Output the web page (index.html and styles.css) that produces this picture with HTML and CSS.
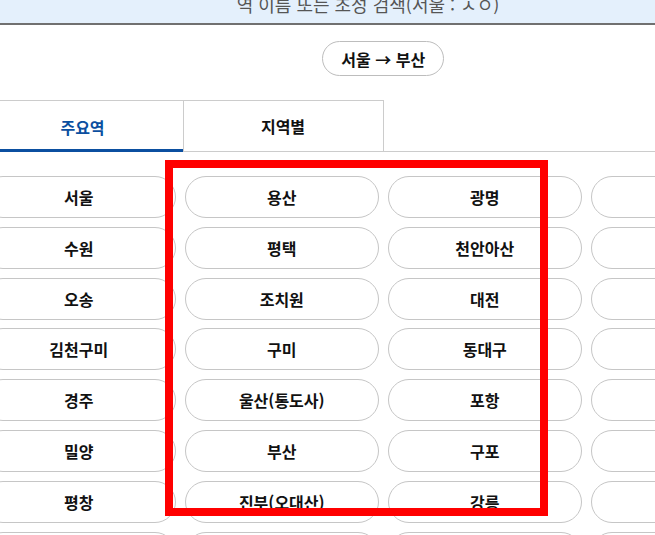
FILE: index.html
```html
<!DOCTYPE html>
<html lang="ko">
<head>
<meta charset="utf-8">
<link rel="stylesheet" href="styles.css">
</head>
<body>
<div class="search"><span class="search-text">역 이름 또는 초성 검색(서울 : ㅅㅇ)</span></div>
<div class="wrap">
  <div class="route-row"><button class="route">서울 → 부산</button></div>
  <div class="tabs">
    <div class="tab tab-first active">주요역</div>
    <div class="tab">지역별</div>
  </div>
  <div class="grid">
    <button class="st">서울</button><button class="st">용산</button><button class="st">광명</button><button class="st">영등포</button>
    <button class="st">수원</button><button class="st">평택</button><button class="st">천안아산</button><button class="st">아산</button>
    <button class="st">오송</button><button class="st">조치원</button><button class="st">대전</button><button class="st">서대전</button>
    <button class="st">김천구미</button><button class="st">구미</button><button class="st">동대구</button><button class="st">신경주</button>
    <button class="st">경주</button><button class="st">울산(통도사)</button><button class="st">포항</button><button class="st">마산</button>
    <button class="st">밀양</button><button class="st">부산</button><button class="st">구포</button><button class="st">창원</button>
    <button class="st">평창</button><button class="st">진부(오대산)</button><button class="st">강릉</button><button class="st">정동진</button>
    <button class="st">광주송정</button><button class="st">목포</button><button class="st">여수EXPO</button><button class="st">전주</button>
  </div>
</div>
<div class="highlight"></div>
</body>
</html>
```

FILE: styles.css
```css
html, body {
  margin: 0;
  padding: 0;
}
body {
  width: 655px;
  height: 535px;
  overflow: hidden;
  position: relative;
  background: #ffffff;
  font-family: "Noto Sans CJK KR", "Noto Sans", sans-serif;
  color: #111111;
}
.search {
  height: 23px;
  background: #e4f0fc;
  border-bottom: 2px solid #707070;
  display: flex;
  justify-content: center;
  padding-left: 81px;
  overflow: hidden;
}
.search-text {
  display: block;
  font-size: 18px;
  line-height: 18px;
  margin-top: -5px;
  color: #555555;
  white-space: nowrap;
}
.wrap {
  width: 803.5px;
  margin-left: -18.5px;
}
.route-row {
  display: flex;
  justify-content: center;
  padding-top: 16px;
}
.route {
  box-sizing: border-box;
  width: 122px;
  height: 35px;
  border: 1px solid #bdbdbd;
  border-radius: 18px;
  background: #ffffff;
  font-family: inherit;
  font-size: 16px;
  font-weight: 700;
  color: #111111;
  padding: 0;
}
.tabs {
  display: flex;
  margin-top: 24px;
  border-bottom: 1px solid #cccccc;
  height: 51px;
}
.tab {
  box-sizing: border-box;
  width: 200px;
  height: 51px;
  border-top: 1px solid #cccccc;
  border-right: 1px solid #cccccc;
  display: flex;
  align-items: center;
  justify-content: center;
  font-size: 16px;
  font-weight: 700;
  color: #111111;
}
.tab-first {
  width: 202px;
  border-left: 1px solid #cccccc;
}
.tab.active {
  color: #0b4fa0;
  height: 52px;
  box-shadow: inset 0 -3px 0 #0b4fa0;
  position: relative;
}
.grid {
  display: grid;
  grid-template-columns: repeat(4, 194.5px);
  column-gap: 8.5px;
  row-gap: 8.8px;
  margin-top: 24px;
}
.st {
  box-sizing: border-box;
  height: 42px;
  border: 1px solid #c6c6c6;
  border-radius: 21px;
  background: #ffffff;
  font-family: inherit;
  font-size: 16px;
  font-weight: 700;
  color: #111111;
  padding: 0;
  white-space: nowrap;
}
.highlight {
  position: absolute;
  left: 165px;
  top: 160px;
  width: 383px;
  height: 356px;
  box-sizing: border-box;
  border: 8px solid #ff0000;
}
```
